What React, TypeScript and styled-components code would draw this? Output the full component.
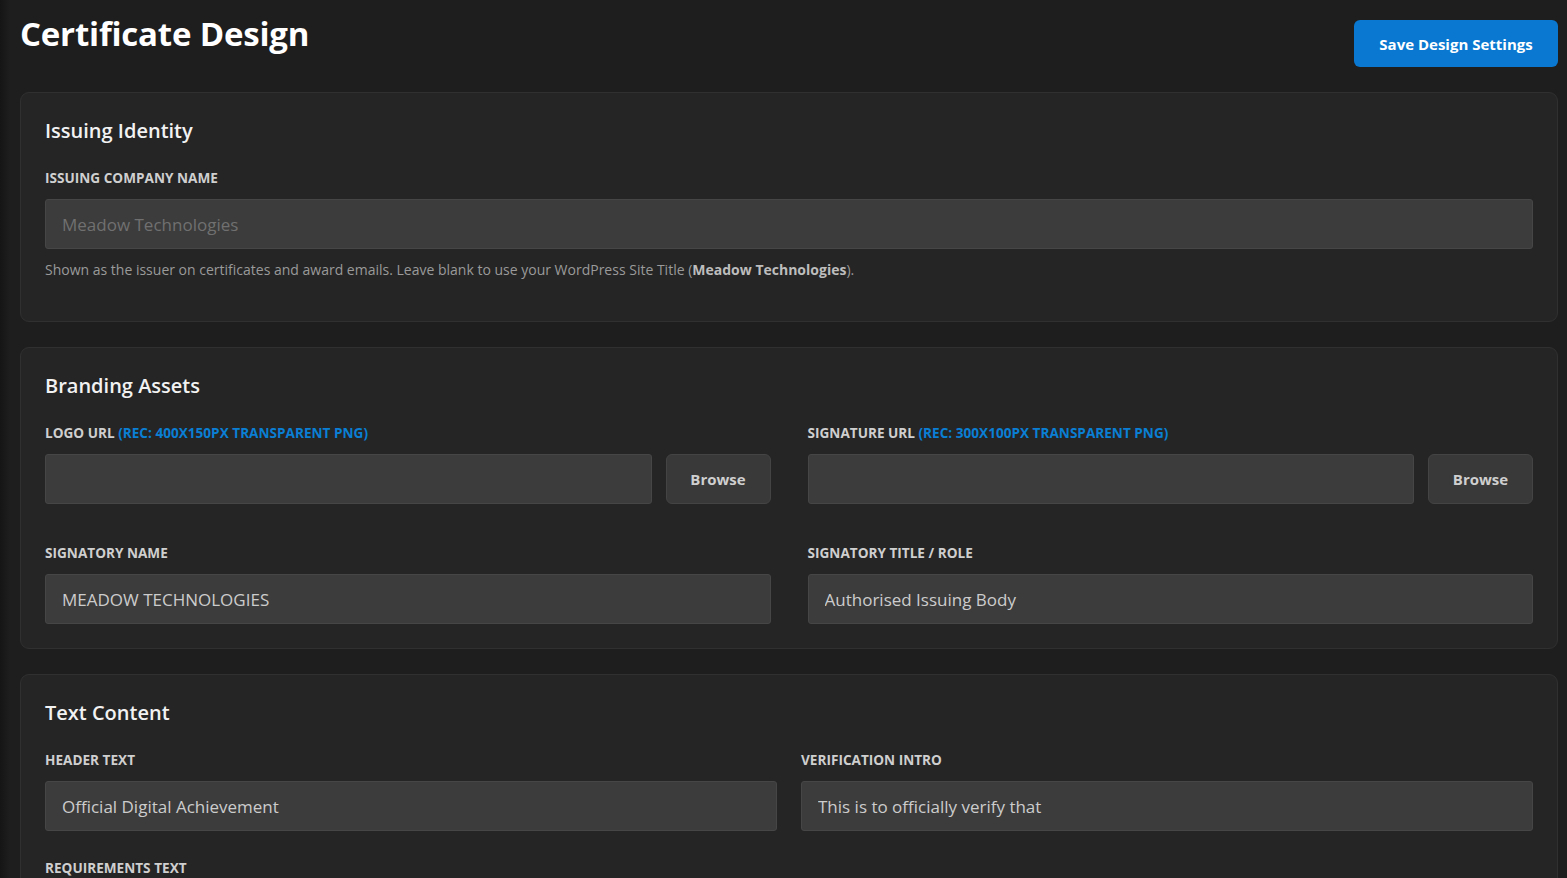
import React from "react";
import styled, { createGlobalStyle } from "styled-components";

const FONT = `"Segoe UI", "Open Sans", "Noto Sans", sans-serif`;

const Global = createGlobalStyle`
  html, body { margin: 0; padding: 0; background: #1e1e1e; }
  body { font-family: ${FONT}; color: #e6e6e6; }
  * { box-sizing: border-box; }
`;

const Page = styled.div`
  min-height: 878px;
  padding: 0 9px 0 20px;
  background: linear-gradient(to right, #151515 0px, #1e1e1e 10px, #1e1e1e 100%);
`;

const Header = styled.header`
  display: flex;
  justify-content: space-between;
  align-items: flex-start;
  height: 92px;
`;

const Title = styled.h1`
  margin: 12px 0 0;
  font-size: 33px;
  line-height: 44px;
  font-weight: 700;
  color: #ffffff;
  letter-spacing: -0.2px;
`;

const PrimaryButton = styled.button`
  margin-top: 20px;
  height: 47px;
  width: 204px;
  border: none;
  border-radius: 6px;
  background: #0a78d0;
  color: #fff;
  font-family: ${FONT};
  font-size: 15px;
  font-weight: 700;
  cursor: pointer;
`;

const Card = styled.section`
  background: #252525;
  border: 1px solid #303030;
  border-radius: 9px;
  padding: 24px;
  margin-bottom: 25px;
  display: flex;
  flex-direction: column;
`;

const CardTitle = styled.h2`
  margin: 0 0 24px;
  font-size: 20px;
  line-height: 28px;
  font-weight: 600;
  color: #f2f2f2;
`;

const Grid = styled.div<{ $gap: number; $rowGap: number }>`
  display: grid;
  grid-template-columns: 1fr 1fr;
  column-gap: ${(p) => p.$gap}px;
  row-gap: ${(p) => p.$rowGap}px;
  align-items: start;
`;

const Field = styled.div`
  display: flex;
  flex-direction: column;
  min-width: 0;
`;

const Label = styled.label`
  font-size: 13.6px;
  line-height: 18px;
  font-weight: 700;
  text-transform: uppercase;
  color: #cfcfcf;
  margin-bottom: 12px;
`;

const Hint = styled.span`
  color: #0a7fd4;
`;

const Input = styled.input`
  flex: 0 0 auto;
  width: 100%;
  min-width: 0;
  height: 50px;
  background: #3c3c3c;
  border: 1px solid #464646;
  border-radius: 3px;
  padding: 0 16px;
  font-family: ${FONT};
  font-size: 17px;
  color: #cccccc;
  outline: none;
  &::placeholder { color: #707070; }
`;

const InputRow = styled.div`
  display: flex;
  gap: 14px;
  ${Input} { flex: 1 1 auto; width: auto; }
`;

const SecondaryButton = styled.button`
  flex: 0 0 105px;
  height: 50px;
  background: #393939;
  border: 1px solid #444;
  border-radius: 6px;
  color: #cfcfcf;
  font-family: ${FONT};
  font-size: 15px;
  font-weight: 700;
  cursor: pointer;
`;

const Help = styled.p`
  margin: 11px 0 17px;
  font-size: 14px;
  line-height: 20px;
  color: #9a9a9a;
  b { color: #bdbdbd; font-weight: 700; }
`;

const Spacer = styled.div<{ $h: number }>`
  height: ${(p) => p.$h}px;
`;

export default function App() {
  return (
    <>
      <Global />
      <Page>
        <Header>
          <Title>Certificate Design</Title>
          <PrimaryButton>Save Design Settings</PrimaryButton>
        </Header>

        <Card>
          <CardTitle>Issuing Identity</CardTitle>
          <Field>
            <Label>Issuing Company Name</Label>
            <Input placeholder="Meadow Technologies" />
            <Help>
              Shown as the issuer on certificates and award emails. Leave blank to use your
              WordPress Site Title (<b>Meadow Technologies</b>).
            </Help>
          </Field>
        </Card>

        <Card>
          <CardTitle>Branding Assets</CardTitle>
          <Grid $gap={37} $rowGap={40}>
            <Field>
              <Label>
                Logo URL <Hint>(Rec: 400x150px transparent PNG)</Hint>
              </Label>
              <InputRow>
                <Input defaultValue="" />
                <SecondaryButton>Browse</SecondaryButton>
              </InputRow>
            </Field>
            <Field>
              <Label>
                Signature URL <Hint>(Rec: 300x100px transparent PNG)</Hint>
              </Label>
              <InputRow>
                <Input defaultValue="" />
                <SecondaryButton>Browse</SecondaryButton>
              </InputRow>
            </Field>
            <Field>
              <Label>Signatory Name</Label>
              <Input defaultValue="MEADOW TECHNOLOGIES" />
            </Field>
            <Field>
              <Label>Signatory Title / Role</Label>
              <Input defaultValue="Authorised Issuing Body" />
            </Field>
          </Grid>
        </Card>

        <Card>
          <CardTitle>Text Content</CardTitle>
          <Grid $gap={24} $rowGap={28}>
            <Field>
              <Label>Header Text</Label>
              <Input defaultValue="Official Digital Achievement" />
            </Field>
            <Field>
              <Label>Verification Intro</Label>
              <Input defaultValue="This is to officially verify that" />
            </Field>
            <Field>
              <Label>Requirements Text</Label>
              <Spacer $h={60} />
            </Field>
          </Grid>
        </Card>
      </Page>
    </>
  );
}
